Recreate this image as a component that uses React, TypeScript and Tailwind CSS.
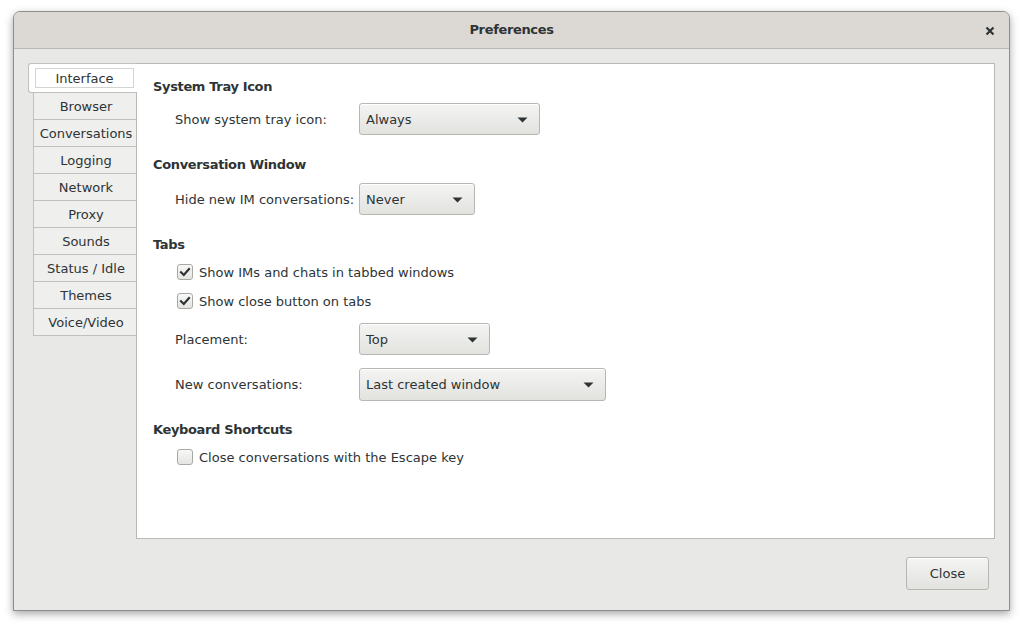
const tabs = ["Browser", "Conversations", "Logging", "Network", "Proxy", "Sounds", "Status / Idle", "Themes", "Voice/Video"];

function Arrow() {
  return (
    <svg width="11" height="6" viewBox="0 0 11 6" className="shrink-0">
      <path d="M0.5 0.5 L10.5 0.5 L5.5 5.5 Z" fill="#2e3436" />
    </svg>
  );
}

function Combo({ value, width, h = "h-[32px]" }: { value: string; width: string; h?: string }) {
  return (
    <div
      className={`${width} ${h} flex items-center justify-between pl-[6px] pr-[11px] pt-[1px] rounded-[3px] border border-[#b6b6b3] bg-gradient-to-b from-[#f4f4f3] to-[#e2e2df] shadow-[inset_0_1px_0_#ffffff]`}
    >
      <span>{value}</span>
      <Arrow />
    </div>
  );
}

function Check({ checked, label, mt }: { checked: boolean; label: string; mt: string }) {
  return (
    <div className={`flex items-center h-[18px] ml-[24px] ${mt}`}>
      <div className="w-[16px] h-[16px] rounded-[3px] border border-[#a8a8a5] bg-gradient-to-b from-[#f8f8f7] to-[#e4e4e2] flex items-center justify-center">
        {checked && (
          <svg width="12" height="12" viewBox="0 0 12 12">
            <path d="M2 6.2 L4.8 9 L10 3" fill="none" stroke="#2e3436" strokeWidth="2.2" strokeLinecap="square" />
          </svg>
        )}
      </div>
      <span className="ml-[6px] pt-[1px]">{label}</span>
    </div>
  );
}

function Row({ label, children, mt }: { label: string; children: React.ReactNode; mt: string }) {
  return (
    <div className={`flex items-center ${mt}`}>
      <div className="w-[206px] pl-[22px] pt-[1px]">{label}</div>
      {children}
    </div>
  );
}

function Heading({ children, mt }: { children: React.ReactNode; mt: string }) {
  return <div className={`font-bold tracking-[-0.35px] ${mt}`}>{children}</div>;
}

export default function App() {
  return (
    <div className="w-[1023px] h-[627px] bg-white pl-[13px] pt-[11px] text-[13px] leading-[18px] text-[#2e3436]" style={{ fontFamily: '"DejaVu Sans", sans-serif' }}>
      <div className="w-[997px] h-[600px] flex flex-col rounded-t-[7px] border border-[#8d8d8b] bg-[#e8e8e7] shadow-[0_3px_8px_rgba(0,0,0,0.35)] overflow-hidden">
        <div className="h-[37px] shrink-0 relative flex items-center justify-center bg-[#dcd9d5] border-b border-[#bcb7b1]">
          <span className="font-bold tracking-[-0.35px]">Preferences</span>
          <svg width="10" height="10" viewBox="0 0 10 10" className="absolute right-[14px] top-[14px]">
            <path d="M1.5 1.5 L8.5 8.5 M8.5 1.5 L1.5 8.5" stroke="#2e3436" strokeWidth="2.2" />
          </svg>
        </div>

        <div className="flex pl-[14px] pr-[14px] pt-[14px]">
          <div className="w-[108px] shrink-0 flex flex-col">
            <div className="h-[30px] -mr-[1px] relative z-10 bg-white border border-r-0 border-[#c0c0bd] rounded-l-[3px] flex items-center pl-[6px]">
              <div className="w-[99px] h-[20px] border border-[#d4d4d2] flex items-center justify-center pt-[1px]">Interface</div>
            </div>
            {tabs.map((t) => (
              <div key={t} className="ml-[5px] h-[27px] pl-[2px] pt-[1px] bg-[#efefee] border border-t-0 border-r-0 border-[#c0c0bd] flex items-center justify-center">
                {t}
              </div>
            ))}
          </div>

          <div className="flex-1 h-[476px] bg-white border border-[#b8b8b5] pl-[16px] pt-[14px]">
            <Heading mt="">System Tray Icon</Heading>
            <Row label="Show system tray icon:" mt="mt-[7px]">
              <Combo value="Always" width="w-[181px]" />
            </Row>

            <Heading mt="mt-[21px]">Conversation Window</Heading>
            <Row label="Hide new IM conversations:" mt="mt-[9px]">
              <Combo value="Never" width="w-[116px]" />
            </Row>

            <Heading mt="mt-[21px]">Tabs</Heading>
            <Check checked label="Show IMs and chats in tabbed windows" mt="mt-[9px]" />
            <Check checked label="Show close button on tabs" mt="mt-[11px]" />
            <Row label="Placement:" mt="mt-[13px]">
              <Combo value="Top" width="w-[131px]" />
            </Row>
            <Row label="New conversations:" mt="mt-[13px]">
              <Combo value="Last created window" width="w-[247px]" h="h-[33px]" />
            </Row>

            <Heading mt="mt-[20px]">Keyboard Shortcuts</Heading>
            <Check checked={false} label="Close conversations with the Escape key" mt="mt-[9px]" />
          </div>
        </div>

        <div className="flex justify-end pr-[20px] pt-[18px]">
          <button className="w-[83px] h-[33px] pt-[1px] rounded-[3px] border border-[#b6b6b3] bg-gradient-to-b from-[#f4f4f3] to-[#e2e2df] shadow-[inset_0_1px_0_#ffffff]">
            Close
          </button>
        </div>
      </div>
    </div>
  );
}
